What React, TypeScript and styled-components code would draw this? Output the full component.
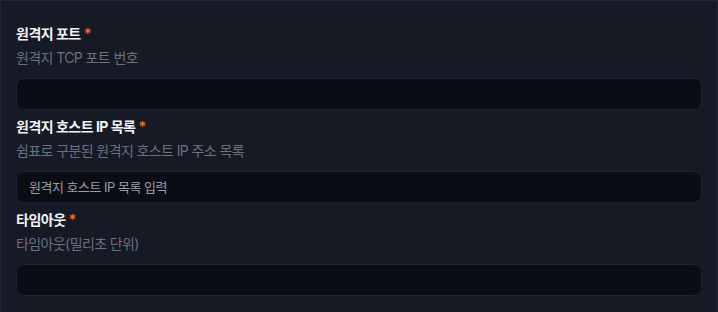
import React from "react";
import styled, { createGlobalStyle } from "styled-components";

const Global = createGlobalStyle`
  html, body { margin: 0; padding: 0; background: #151a25; }
  body { font-family: "Inter", "Noto Sans CJK KR", sans-serif; }
  * { box-sizing: border-box; }
`;

const Card = styled.div`
  width: 718px;
  min-height: 360px;
  background: #151a25;
  border: 1px solid #1f2638;
  padding: 23px 15px 24px;
  display: flex;
  flex-direction: column;
  gap: 7px;
`;

const Field = styled.div`
  display: flex;
  flex-direction: column;
`;

const Label = styled.label`
  font-size: 14px;
  line-height: 20px;
  font-weight: 700;
  color: #f1f3f6;
  letter-spacing: -0.5px;
`;

const Required = styled.span`
  color: #f26b1d;
  margin-left: 3px;
`;

const Description = styled.div`
  margin-top: 4px;
  font-size: 14px;
  line-height: 20px;
  color: #6b717d;
  letter-spacing: -0.6px;
`;

const Input = styled.input`
  margin-top: 10px;
  height: 32px;
  width: 100%;
  background: #0a0d14;
  border: 1px solid #1c2232;
  border-radius: 8px;
  padding: 0 12px;
  font-family: "Inter", "Noto Sans CJK KR", sans-serif;
  font-size: 13px;
  letter-spacing: -0.5px;
  color: #e5e7eb;
  outline: none;
  &::placeholder { color: #9a9ea6; }
`;

const fields = [
  { label: "원격지 포트", desc: "원격지 TCP 포트 번호", placeholder: "" },
  { label: "원격지 호스트 IP 목록", desc: "쉼표로 구분된 원격지 호스트 IP 주소 목록", placeholder: "원격지 호스트 IP 목록 입력" },
  { label: "타임아웃", desc: "타임아웃(밀리초 단위)", placeholder: "" },
];

export default function App() {
  return (
    <>
      <Global />
      <Card>
        {fields.map((f) => (
          <Field key={f.label}>
            <Label>
              {f.label}
              <Required>*</Required>
            </Label>
            <Description>{f.desc}</Description>
            <Input placeholder={f.placeholder} />
          </Field>
        ))}
      </Card>
    </>
  );
}
